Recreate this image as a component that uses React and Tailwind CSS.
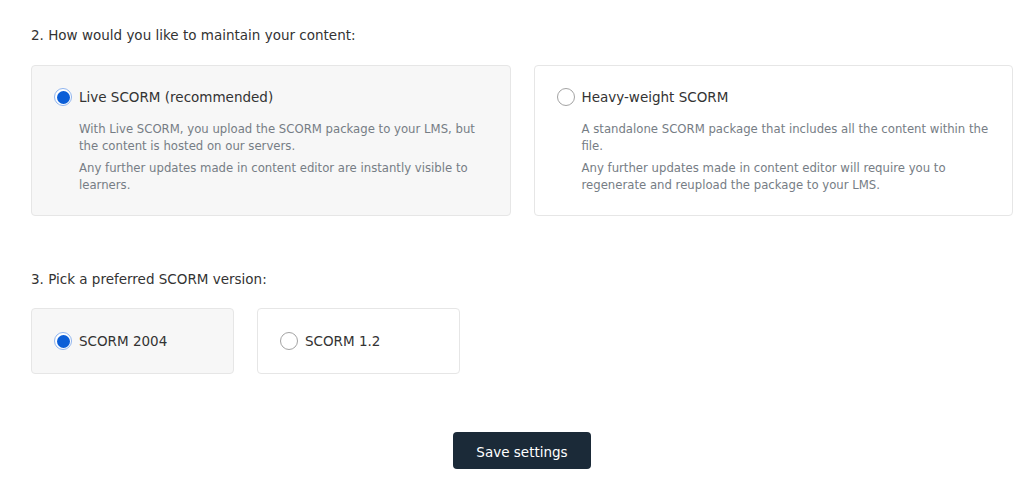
import { useState } from "react";

function Radio({ checked }) {
  if (checked) {
    return (
      <span className="flex h-[18px] w-[18px] shrink-0 items-center justify-center rounded-full border border-[#8fb4ee] bg-white">
        <span className="h-[13px] w-[13px] rounded-full bg-[#0b5ed7]" />
      </span>
    );
  }
  return <span className="h-[18px] w-[18px] shrink-0 rounded-full border-[1.5px] border-[#a3a3a3] bg-white" />;
}

function OptionCard({ checked, title, paras, onClick }) {
  return (
    <div
      onClick={onClick}
      className={`flex-1 cursor-pointer rounded border pl-[22px] pr-[22px] pt-[21px] pb-[21px] ${checked ? "bg-[#f7f7f7] border-[#e6e6e6]" : "bg-white border-[#e6e6e6]"}`}
    >
      <div className="flex items-center gap-[7px] h-[20px]">
        <Radio checked={checked} />
        <span className="text-[13.5px] text-[#333]">{title}</span>
      </div>
      <div className="pl-[25px] pt-[14px] text-[11.7px] leading-[17px] text-[#767d85] space-y-[5px]">
        {paras.map((p, i) => <p key={i}>{p}</p>)}
      </div>
    </div>
  );
}

function VersionCard({ checked, label, onClick }) {
  return (
    <div
      onClick={onClick}
      className={`flex h-[66px] w-[203px] cursor-pointer items-center gap-[7px] rounded border pl-[22px] ${checked ? "bg-[#f7f7f7] border-[#e6e6e6]" : "bg-white border-[#e6e6e6]"}`}
    >
      <Radio checked={checked} />
      <span className="text-[13.5px] text-[#333]">{label}</span>
    </div>
  );
}

export default function App() {
  const [mode, setMode] = useState("live");
  const [ver, setVer] = useState("2004");

  return (
    <div className="min-h-[495px] bg-white pl-[31px] pr-[11px] pt-[26px] font-['DejaVu_Sans',Verdana,sans-serif]">
      <h2 className="text-[13.5px] text-[#333] leading-[18px]">2. How would you like to maintain your content:</h2>

      <div className="mt-[21px] flex gap-[23px]">
        <OptionCard
          checked={mode === "live"}
          onClick={() => setMode("live")}
          title="Live SCORM (recommended)"
          paras={[
            "With Live SCORM, you upload the SCORM package to your LMS, but the content is hosted on our servers.",
            "Any further updates made in content editor are instantly visible to learners.",
          ]}
        />
        <OptionCard
          checked={mode === "heavy"}
          onClick={() => setMode("heavy")}
          title="Heavy-weight SCORM"
          paras={[
            "A standalone SCORM package that includes all the content within the file.",
            "Any further updates made in content editor will require you to regenerate and reupload the package to your LMS.",
          ]}
        />
      </div>

      <h2 className="mt-[54px] text-[13.5px] text-[#333] leading-[18px]">3. Pick a preferred SCORM version:</h2>

      <div className="mt-[20px] flex gap-[23px]">
        <VersionCard checked={ver === "2004"} onClick={() => setVer("2004")} label="SCORM 2004" />
        <VersionCard checked={ver === "1.2"} onClick={() => setVer("1.2")} label="SCORM 1.2" />
      </div>

      <div className="mt-[58px] flex justify-center">
        <button className="h-[37px] w-[138px] rounded bg-[#1b2a38] pt-[4px] text-[13.5px] text-white">Save settings</button>
      </div>
    </div>
  );
}
